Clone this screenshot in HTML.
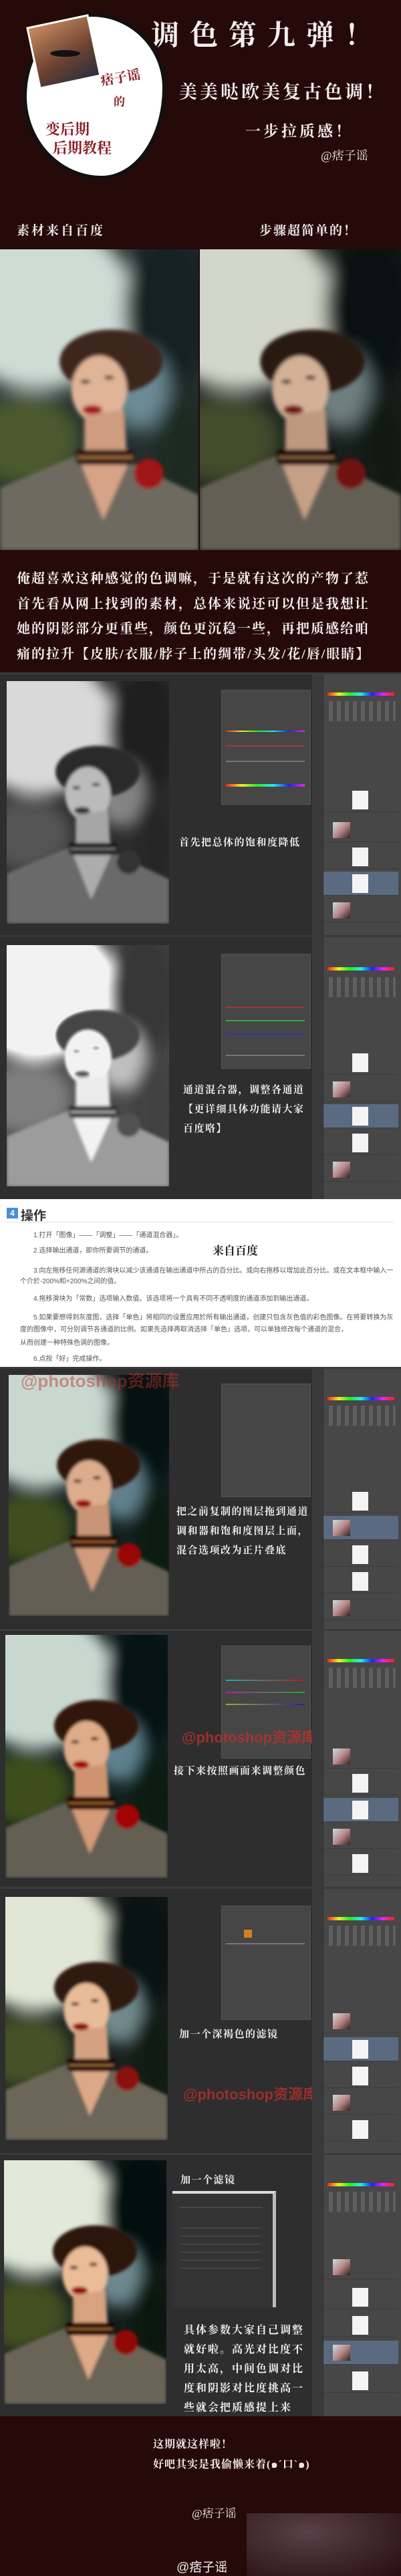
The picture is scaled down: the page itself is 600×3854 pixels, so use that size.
<!DOCTYPE html>
<html><head><meta charset="utf-8">
<style>
*{margin:0;padding:0;box-sizing:border-box}
body{width:600px;height:3854px;position:relative;background:#260909;font-family:"Liberation Serif","Noto Serif CJK SC","Noto Sans CJK SC",serif;overflow:hidden}
.a{position:absolute}
.w{color:#f2eeee}
.ph{position:absolute;display:block}
.ps{position:absolute;left:0;width:600px;background:#2e2e2e;border-top:3px solid #3a3a3a}
.adj{position:absolute;left:331px;width:134px;background:#464646;border:1px solid #555}
.adj i{position:absolute;left:6px;right:8px;height:2px}
.tb{position:absolute;left:467px;width:16px;top:0;bottom:0;background:#3a3a3a}
.rp{position:absolute;left:484px;width:116px;top:0;bottom:0;background:#474747}
.spec{position:absolute;left:6px;width:100px;height:5px;background:linear-gradient(90deg,#e22,#ee2,#2e2,#2ee,#22e,#e2e,#e22)}
.row{position:absolute;left:0;width:112px;height:36px;border-bottom:1px solid #3c3c3c}
.row.sel{background:#5a6a80}
.th{position:absolute;left:43px;top:4px;width:24px;height:28px;background:#f4f4f4}
.tp{position:absolute;left:14px;top:6px;width:26px;height:24px;background:linear-gradient(135deg,#cdd 0,#b88 50%,#322 100%)}
.ic{position:absolute;left:8px;width:100px;height:30px;background:repeating-linear-gradient(90deg,#777 0 6px,transparent 6px 12px);opacity:.5}
.txt{position:absolute;color:#f0f0f0;font-size:15px;line-height:29px;font-weight:bold;letter-spacing:1.5px;white-space:nowrap}
.wt{position:absolute;background:#fff;left:0;width:600px}
.wl{position:absolute;font-family:"Liberation Sans","Noto Sans CJK SC",sans-serif;font-size:10px;color:#555;white-space:nowrap}
.wm{position:absolute;color:#c0302a;font-family:"Liberation Sans","Noto Sans CJK SC",sans-serif;font-size:26px;font-weight:bold;opacity:.75;white-space:nowrap}
</style></head><body>
<svg width="0" height="0" style="position:absolute">
<defs>
<filter id="bl" x="-20%" y="-20%" width="140%" height="140%"><feGaussianBlur stdDeviation="9"/></filter>
<filter id="bs"><feGaussianBlur stdDeviation="2"/></filter>
<symbol id="ph" viewBox="0 0 200 300" preserveAspectRatio="none">
<rect width="200" height="300" fill="#24302f"/>
<g filter="url(#bl)">
<ellipse cx="40" cy="55" rx="95" ry="85" fill="#cfdcd6"/>
<ellipse cx="170" cy="60" rx="45" ry="80" fill="#162024"/>
<ellipse cx="140" cy="140" rx="30" ry="40" fill="#6c8a94"/>
<ellipse cx="25" cy="190" rx="55" ry="45" fill="#4c5a2e"/>
<ellipse cx="185" cy="200" rx="30" ry="60" fill="#1e2a22"/>
</g>
<g filter="url(#bs)">
<ellipse cx="112" cy="112" rx="52" ry="32" fill="#3e261a"/>
<ellipse cx="100" cy="140" rx="28" ry="34" fill="#e0b496"/>
<path d="M85 165 L85 212 L128 212 L125 160 Z" fill="#cf9d80"/>
<ellipse cx="93" cy="160" rx="10" ry="4.5" fill="#a11616"/>
<ellipse cx="86" cy="132" rx="5" ry="2" fill="#4a3028"/>
<ellipse cx="110" cy="128" rx="5" ry="2" fill="#4a3028"/>
<path d="M0 238 L78 205 L104 270 L130 212 L200 245 L200 300 L0 300 Z" fill="#6e6a61"/>
<path d="M78 205 L104 270 L130 212 Z" fill="#d6a386"/>
<rect x="76" y="200" width="60" height="15" rx="6" fill="#2a0f0f"/>
<rect x="78" y="206" width="56" height="3" fill="#a07040"/>
<circle cx="150" cy="224" r="15" fill="#a01616"/>
</g>
</symbol>
</defs>
</svg>

<!-- HEADER -->
<div class="a" style="left:34px;top:19px;width:215px;height:250px;background:#fff;border:6px solid #111;border-radius:48% 52% 45% 55%/50% 45% 55% 50%"></div>
<div class="a" style="left:48px;top:30px;width:95px;height:95px;background:linear-gradient(160deg,#c98a60,#6a4030 60%,#2a3040);border:3px solid #fff;transform:rotate(-12deg)"></div>
<div class="a" style="left:75px;top:75px;width:45px;height:10px;background:#111;border-radius:50%"></div>
<div class="a" style="left:150px;top:100px;font-size:20px;color:#8a1a24;font-weight:bold;transform:rotate(-10deg)">痞子谣</div>
<div class="a" style="left:170px;top:138px;font-size:17px;color:#8a1a24;font-weight:bold">的</div>
<div class="a" style="left:68px;top:180px;font-size:22px;color:#8a1a24;font-weight:bold;line-height:28px;width:170px;white-space:nowrap">变后期<br>&nbsp;&nbsp;后期教程</div>
<div class="a w" style="left:226px;top:25px;font-size:42px;line-height:58px;letter-spacing:16px;font-weight:bold;white-space:nowrap">调色第九弹！</div>
<div class="a w" style="left:268px;top:116px;font-size:27px;letter-spacing:4px;font-weight:bold;white-space:nowrap">美美哒欧美复古色调！</div>
<div class="a w" style="left:367px;top:178px;font-size:23px;letter-spacing:4px;font-weight:bold;white-space:nowrap">一步拉质感！</div>
<div class="a w" style="left:480px;top:219px;font-size:18px;white-space:nowrap">@痞子谣</div>
<div class="a w" style="left:25px;top:330px;font-size:19px;letter-spacing:3px;font-weight:bold;white-space:nowrap">素材来自百度</div>
<div class="a w" style="left:388px;top:330px;font-size:19px;letter-spacing:2px;font-weight:bold;white-space:nowrap">步骤超简单的！</div>
<svg class="ph" style="left:0;top:373px;width:297px;height:450px"><use href="#ph"/></svg>
<svg class="ph" style="left:299px;top:373px;width:301px;height:450px;filter:saturate(.75) contrast(1.15) brightness(.9) sepia(.15)"><use href="#ph"/></svg>
<div class="a w" style="left:25px;top:848px;font-size:20px;line-height:37.5px;letter-spacing:2px;font-weight:bold;white-space:nowrap">俺超喜欢这种感觉的色调嘛，于是就有这次的产物了惹<br>首先看从网上找到的素材，总体来说还可以但是我想让<br>她的阴影部分更重些，颜色更沉稳一些，再把质感给咱<br>痛的拉升【皮肤/衣服/脖子上的绸带/头发/花/唇/眼睛】</div>

<!-- PS 1 -->
<div class="ps" style="top:1006px;height:393px">
 <svg class="ph" style="left:10px;top:10px;width:243px;height:363px;filter:grayscale(1)"><use href="#ph"/></svg>
 <div class="adj" style="top:23px;height:172px"><i style="top:60px;background:linear-gradient(90deg,#e22,#ee2,#2e2,#2ee,#22e,#e2e)"></i><i style="top:82px;background:#a33"></i><i style="top:105px;background:#777"></i><i style="top:140px;height:4px;background:linear-gradient(90deg,#e22,#ee2,#2e2,#2ee,#22e,#e2e)"></i></div>
 <div class="txt" style="left:268px;top:238px">首先把总体的饱和度降低</div>
 <div class="tb"></div>
 <div class="rp"><div class="spec" style="top:27px"></div><div class="ic" style="top:40px"></div><div class="row" style="top:170px"><div class="th"></div></div><div class="row" style="top:215px"><div class="tp"></div></div><div class="row" style="top:255px"><div class="th"></div></div><div class="row sel" style="top:295px"><div class="th"></div></div><div class="row" style="top:335px"><div class="tp"></div></div></div>
</div>

<!-- PS 2 -->
<div class="ps" style="top:1399px;height:395px">
 <svg class="ph" style="left:10px;top:12px;width:243px;height:361px;filter:grayscale(1) brightness(1.5) contrast(.9)"><use href="#ph"/></svg>
 <div class="adj" style="top:25px;height:172px"><i style="top:78px;background:#a33"></i><i style="top:98px;background:#3a3"></i><i style="top:118px;background:#33a"></i><i style="top:150px;background:#777"></i></div>
 <div class="txt" style="left:274px;top:215px">通道混合器，调整各通道<br>【更详细具体功能请大家<br>百度咯】</div>
 <div class="tb"></div>
 <div class="rp"><div class="spec" style="top:45px"></div><div class="ic" style="top:60px"></div><div class="row" style="top:170px"><div class="th"></div></div><div class="row" style="top:210px"><div class="tp"></div></div><div class="row sel" style="top:250px"><div class="th"></div></div><div class="row" style="top:290px"><div class="th"></div></div><div class="row" style="top:330px"><div class="tp"></div></div></div>
</div>

<!-- WHITE -->
<div class="wt" style="top:1794px;height:251px">
 <div class="a" style="left:10px;top:13px;width:17px;height:16px;background:#4a90d8;color:#fff;font:bold 12px 'Liberation Sans',sans-serif;text-align:center;line-height:16px">4</div>
 <div class="a" style="left:31px;top:10px;font:bold 19px 'Liberation Sans','Noto Sans CJK SC',sans-serif;color:#333">操作</div>
 <div class="a" style="left:10px;top:34px;width:580px;height:1px;background:#e0e0e0"></div>
 <div class="wl" style="left:50px;top:45px">1.打开「图像」——「调整」——「通道混合器」。</div>
 <div class="a" style="left:318px;top:63px;font-size:17px;font-weight:bold;color:#222">来自百度</div>
 <div class="wl" style="left:50px;top:68px">2.选择输出通道，即你所要调节的通道。</div>
 <div class="wl" style="left:50px;top:98px">3.向左拖移任何源通道的滑块以减少该通道在输出通道中所占的百分比。或向右拖移以增加此百分比。或在文本框中输入一</div>
 <div class="wl" style="left:30px;top:114px">个介於-200%和+200%之间的值。</div>
 <div class="wl" style="left:50px;top:140px">4.拖移滑块为「常数」选项输入数值。该选项将一个具有不同不透明度的通道添加到输出通道。</div>
 <div class="wl" style="left:50px;top:168px">5.如果要想得到灰度图，选择「单色」将相同的设置应用於所有输出通道，创建只包含灰色值的彩色图像。在将要转换为灰</div>
 <div class="wl" style="left:30px;top:186px">度的图像中，可分别调节各通道的比例。如果先选择再取消选择「单色」选项，可以单独修改每个通道的混合，</div>
 <div class="wl" style="left:30px;top:206px">从而创建一种特殊色调的图像。</div>
 <div class="wl" style="left:50px;top:230px">6.点按「好」完成操作。</div>
</div>

<!-- PS 3 -->
<div class="ps" style="top:2045px;height:392px">
 <svg class="ph" style="left:13px;top:9px;width:240px;height:361px;filter:contrast(1.15) brightness(.92)"><use href="#ph"/></svg>
 <div class="wm" style="left:31px;top:-2px;opacity:.45">@photoshop资源库</div>
 <div class="adj" style="top:22px;height:170px"></div>
 <div class="txt" style="left:264px;top:200px">把之前复制的图层拖到通道<br>调和器和饱和度图层上面，<br>混合选项改为正片叠底</div>
 <div class="tb"></div>
 <div class="rp"><div class="spec" style="top:42px"></div><div class="ic" style="top:55px"></div><div class="row" style="top:180px"><div class="th"></div></div><div class="row sel" style="top:220px"><div class="tp"></div></div><div class="row" style="top:260px"><div class="th"></div></div><div class="row" style="top:300px"><div class="th"></div></div><div class="row" style="top:340px"><div class="tp"></div></div></div>
</div>

<!-- PS 4 -->
<div class="ps" style="top:2437px;height:386px">
 <svg class="ph" style="left:8px;top:6px;width:243px;height:364px;filter:contrast(1.15) brightness(.92) saturate(1.1)"><use href="#ph"/></svg>
 <div class="adj" style="top:22px;height:169px"><i style="top:50px;background:linear-gradient(90deg,#2aa,#a22)"></i><i style="top:68px;background:linear-gradient(90deg,#a2a,#2a2)"></i><i style="top:86px;background:linear-gradient(90deg,#aa2,#22a)"></i></div>
 <div class="wm" style="left:272px;top:142px;font-size:22px">@photoshop资源库</div>
 <div class="txt" style="left:260px;top:196px">接下来按照画面来调整颜色</div>
 <div class="tb"></div>
 <div class="rp"><div class="spec" style="top:42px"></div><div class="ic" style="top:55px"></div><div class="row" style="top:170px"><div class="tp"></div></div><div class="row" style="top:210px"><div class="th"></div></div><div class="row sel" style="top:250px"><div class="th"></div></div><div class="row" style="top:290px"><div class="tp"></div></div><div class="row" style="top:330px"><div class="th"></div></div></div>
</div>

<!-- PS 5 -->
<div class="ps" style="top:2823px;height:398px">
 <svg class="ph" style="left:8px;top:12px;width:243px;height:364px;filter:contrast(1.15) brightness(.95) sepia(.2)"><use href="#ph"/></svg>
 <div class="adj" style="top:25px;height:171px"><div class="a" style="left:33px;top:35px;width:12px;height:12px;background:#d08020"></div><i style="top:55px;background:#777"></i></div>
 <div class="txt" style="left:268px;top:204px">加一个深褐色的滤镜</div>
 <div class="wm" style="left:274px;top:290px;font-size:22px">@photoshop资源库</div>
 <div class="tb"></div>
 <div class="rp"><div class="spec" style="top:42px"></div><div class="ic" style="top:55px"></div><div class="row" style="top:180px"><div class="tp"></div></div><div class="row sel" style="top:222px"><div class="th"></div></div><div class="row" style="top:262px"><div class="th"></div></div><div class="row" style="top:302px"><div class="tp"></div></div><div class="row" style="top:342px"><div class="th"></div></div></div>
</div>

<!-- PS 6 -->
<div class="ps" style="top:3221px;height:394px">
 <svg class="ph" style="left:6px;top:8px;width:243px;height:365px;filter:contrast(1.2) brightness(.95) sepia(.15)"><use href="#ph"/></svg>
 <div class="txt" style="left:270px;top:24px">加一个滤镜</div>
 <div class="a" style="left:258px;top:54px;width:155px;height:174px;background:#333;border-top:4px solid #ddd;border-right:5px solid #bbb">
  <div class="a" style="left:10px;top:20px;width:125px;height:1px;background:#555"></div>
  <div class="a" style="left:12px;top:40px;width:120px;height:80px;background:repeating-linear-gradient(180deg,transparent 0 11px,#555 11px 12px)"></div>
 </div>
 <div class="txt" style="left:275px;top:248px;font-size:16px;letter-spacing:2px">具体参数大家自己调整<br>就好啦。高光对比度不<br>用太高，中间色调对比<br>度和阴影对比度挑高一<br>些就会把质感提上来</div>
 <div class="tb"></div>
 <div class="rp"><div class="spec" style="top:42px"></div><div class="ic" style="top:55px"></div><div class="row" style="top:150px"><div class="tp"></div></div><div class="row" style="top:195px"><div class="th"></div></div><div class="row" style="top:237px"><div class="th"></div></div><div class="row sel" style="top:278px"><div class="tp"></div></div><div class="row" style="top:320px"><div class="th"></div></div></div>
</div>

<!-- FOOTER -->
<div class="a" style="left:369px;top:3760px;width:231px;height:94px;background:radial-gradient(ellipse at 40% 30%,#5a4048,#3a2226 60%,#2a0e10)"></div>
<div class="a w" style="left:229px;top:3643px;font-size:16px;line-height:30px;font-weight:bold;letter-spacing:1px;white-space:nowrap">这期就这样啦！<br>好吧其实是我偷懒来着(๑´口`๑)</div>
<div class="a w" style="left:287px;top:3746px;font-size:17px;white-space:nowrap">@痞子谣</div>
<div class="a w" style="left:264px;top:3826px;font-size:19px;font-family:'Liberation Sans','Noto Sans CJK SC',sans-serif;white-space:nowrap">@痞子谣</div>
</body></html>
